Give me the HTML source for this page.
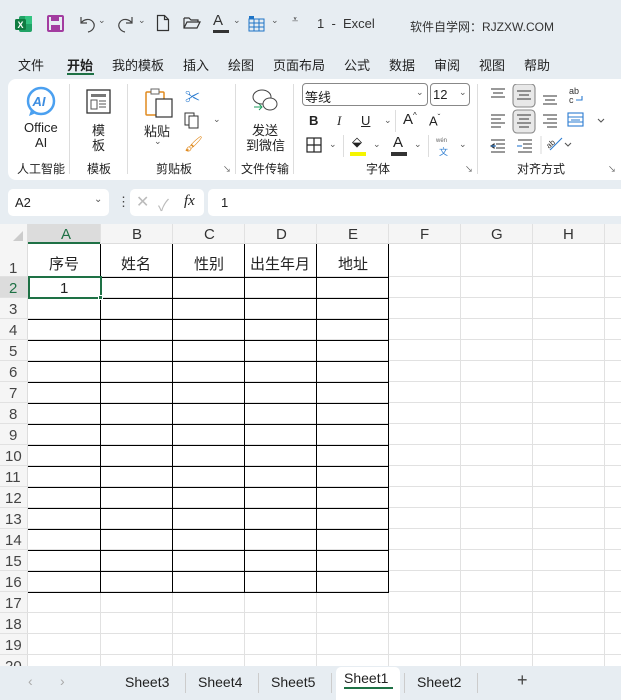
<!DOCTYPE html>
<html><head><meta charset="utf-8"><style>
*{margin:0;padding:0;box-sizing:border-box}
body{width:621px;height:700px;overflow:hidden;background:#e7edf2;font-family:"Liberation Sans","Noto Sans CJK SC",sans-serif;position:relative;color:#222}
.a{position:absolute}
.t{position:absolute;font-size:13px;white-space:nowrap}
.gl{color:#555;font-size:12px}
</style></head><body>
<!-- title bar -->
<svg class="a" style="left:14px;top:14px" width="20" height="20"><rect x="5" y="2" width="13" height="16" rx="2" fill="#21a366"/><rect x="11" y="2" width="7" height="8" fill="#33c481"/><rect x="1" y="5" width="11" height="11" rx="1.5" fill="#107c41"/><text x="3.5" y="14" font-size="9" fill="#fff" font-weight="bold" font-family="Liberation Sans">X</text></svg>
<svg class="a" style="left:46px;top:14px" width="20" height="20"><rect x="2" y="2" width="15" height="15" rx="1" fill="none" stroke="#a33ca0" stroke-width="2"/><rect x="5" y="2" width="8" height="5" fill="#a33ca0"/><rect x="5" y="11" width="9" height="6" fill="#a33ca0"/></svg>
<svg class="a" style="left:77px;top:14px" width="20" height="20"><path d="M4 3v6h6 M4 9c3-4 9-5 12-1c3 4 0 9-5 10" fill="none" stroke="#444" stroke-width="1.2"/></svg><div class="t gl" style="left:98px;top:15px;font-size:9px">⌄</div>
<svg class="a" style="left:116px;top:14px" width="20" height="20"><path d="M16 3v6h-6 M16 9c-3-4-9-5-12-1c-3 4 0 9 5 10" fill="none" stroke="#444" stroke-width="1.2"/></svg><div class="t gl" style="left:138px;top:15px;font-size:9px">⌄</div>
<svg class="a" style="left:156px;top:14px" width="14" height="18"><path d="M1.5 1.5h7l4 4v11h-11z M8.5 1.5v4h4" fill="none" stroke="#333" stroke-width="1.2"/></svg>
<svg class="a" style="left:183px;top:16px" width="18" height="14"><path d="M1 2h5l2 2h7v2 M1 2v10h13l3-6H4l-3 6" fill="none" stroke="#333" stroke-width="1.2"/></svg>
<div class="t" style="left:213px;top:12px;font-size:15px;color:#333">A</div><div class="a" style="left:213px;top:30px;width:16px;height:3px;background:#333"></div><div class="t gl" style="left:233px;top:15px;font-size:9px">⌄</div>
<svg class="a" style="left:248px;top:15px" width="18" height="17"><rect x="1" y="4" width="15" height="12" fill="none" stroke="#1e74c6"/><path d="M1 8h15M1 12h15M6 4v12M11 4v12" stroke="#1e74c6"/><rect x="1" y="1" width="5" height="3" fill="#1e74c6"/></svg><div class="t gl" style="left:271px;top:15px;font-size:9px">⌄</div>
<div class="t" style="left:292px;top:14px;font-size:11px;color:#444">⩡</div>
<div class="t" style="left:317px;top:16px;font-size:13px;color:#333">1&nbsp; -&nbsp; Excel</div>
<div class="t" style="left:410px;top:18px;font-size:12px;color:#333">软件自学网：RJZXW.COM</div>
<!-- tabs -->
<div class="t" style="left:18px;top:55px">文件</div>
<div class="t" style="left:67px;top:55px;font-weight:bold">开始</div>
<div class="a" style="left:67px;top:73px;width:27px;height:2px;background:#1e7145"></div>
<div class="t" style="left:112px;top:55px">我的模板</div>
<div class="t" style="left:183px;top:55px">插入</div>
<div class="t" style="left:228px;top:55px">绘图</div>
<div class="t" style="left:273px;top:55px">页面布局</div>
<div class="t" style="left:344px;top:55px">公式</div>
<div class="t" style="left:389px;top:55px">数据</div>
<div class="t" style="left:434px;top:55px">审阅</div>
<div class="t" style="left:479px;top:55px">视图</div>
<div class="t" style="left:524px;top:55px">帮助</div>
<!-- ribbon -->
<div class="a" style="left:8px;top:79px;width:640px;height:101px;background:#fff;border-radius:8px"></div>
<svg class="a" style="left:25px;top:86px" width="32" height="32"><circle cx="16" cy="15" r="13" fill="#fff" stroke="#4ba0f0" stroke-width="2.5"/><path d="M6 24l-2 6 7-3" fill="#4ba0f0"/><text x="7.5" y="20" font-size="13" font-weight="bold" font-style="italic" fill="#3b8ce0" font-family="Liberation Sans">AI</text></svg>
<div class="t" style="left:24px;top:120px">Office</div><div class="t" style="left:35px;top:135px">AI</div>
<div class="t" style="left:17px;top:160px;font-size:12px">人工智能</div>
<div class="a" style="left:69px;top:84px;width:1px;height:90px;background:#ddd"></div>
<svg class="a" style="left:86px;top:89px" width="26" height="26"><rect x="1" y="1" width="23" height="23" fill="none" stroke="#333" stroke-width="1.3"/><rect x="5" y="5" width="15" height="3" fill="#777"/><rect x="5" y="11" width="6" height="9" fill="none" stroke="#555"/><path d="M13 12h7M13 15h7M13 18h7" stroke="#555"/></svg>
<div class="t" style="left:92px;top:120px">模</div><div class="t" style="left:92px;top:135px">板</div>
<div class="t" style="left:87px;top:160px;font-size:12px">模板</div>
<div class="a" style="left:127px;top:84px;width:1px;height:90px;background:#ddd"></div>
<svg class="a" style="left:144px;top:87px" width="32" height="32"><rect x="2" y="5" width="18" height="23" rx="1" fill="#fff" stroke="#e08a1e" stroke-width="1.5"/><rect x="7" y="2" width="8" height="5" fill="#fff" stroke="#666"/><rect x="12" y="12" width="16" height="18" fill="#fff" stroke="#333" stroke-width="1.2"/></svg>
<div class="t" style="left:144px;top:121px">粘贴</div><div class="t gl" style="left:154px;top:136px;font-size:9px">⌄</div>
<div class="t" style="left:185px;top:86px;font-size:15px;color:#2a7bd0">✂</div>
<svg class="a" style="left:184px;top:112px" width="16" height="18"><rect x="1" y="1" width="9" height="12" fill="#fff" stroke="#333"/><rect x="5" y="4" width="9" height="12" fill="#fff" stroke="#333"/></svg>
<div class="t gl" style="left:213px;top:114px;font-size:9px">⌄</div>
<div class="t" style="left:184px;top:135px;font-size:15px;color:#e08a1e">🖌</div>
<div class="t" style="left:156px;top:160px;font-size:12px">剪贴板</div>
<div class="t gl" style="left:223px;top:164px;font-size:8px">↘</div>
<div class="a" style="left:235px;top:84px;width:1px;height:90px;background:#ddd"></div>
<svg class="a" style="left:251px;top:88px" width="28" height="26"><ellipse cx="11" cy="9" rx="9" ry="7" fill="#fff" stroke="#444"/><ellipse cx="19" cy="16" rx="7" ry="6" fill="#fff" stroke="#444"/><path d="M3 19h8M8 16l3 3-3 3" stroke="#1e9e5e" fill="none"/></svg>
<div class="t" style="left:252px;top:120px">发送</div><div class="t" style="left:246px;top:135px">到微信</div>
<div class="t" style="left:241px;top:160px;font-size:12px">文件传输</div>
<div class="a" style="left:293px;top:84px;width:1px;height:90px;background:#ddd"></div>
<div class="a" style="left:302px;top:83px;width:126px;height:23px;border:1px solid #888;border-radius:4px"></div>
<div class="t" style="left:305px;top:87px">等线</div><div class="t gl" style="left:416px;top:87px;font-size:9px">⌄</div>
<div class="a" style="left:430px;top:83px;width:40px;height:23px;border:1px solid #888;border-radius:4px"></div>
<div class="t" style="left:433px;top:87px">12</div><div class="t gl" style="left:459px;top:87px;font-size:9px">⌄</div>
<div class="t" style="left:309px;top:113px;font-weight:bold">B</div>
<div class="t" style="left:337px;top:113px;font-style:italic;font-family:'Liberation Serif'">I</div>
<div class="t" style="left:361px;top:113px;text-decoration:underline">U</div><div class="t gl" style="left:384px;top:115px;font-size:9px">⌄</div>
<div class="a" style="left:395px;top:110px;width:1px;height:22px;background:#ddd"></div>
<div class="t" style="left:403px;top:111px;font-size:15px">A<sup style="font-size:8px">^</sup></div>
<div class="t" style="left:429px;top:113px;font-size:13px">A<sup style="font-size:8px">ˇ</sup></div>
<svg class="a" style="left:306px;top:137px" width="16" height="16"><rect x="1" y="1" width="14" height="14" fill="none" stroke="#222" stroke-width="1.2"/><path d="M8 1v14M1 8h14" stroke="#222" stroke-width="1.2"/></svg><div class="t gl" style="left:329px;top:139px;font-size:9px">⌄</div>
<div class="a" style="left:343px;top:135px;width:1px;height:22px;background:#ddd"></div>
<div class="t" style="left:352px;top:134px;font-size:13px">⬙</div><div class="a" style="left:350px;top:152px;width:16px;height:4px;background:#f5f500"></div><div class="t gl" style="left:373px;top:139px;font-size:9px">⌄</div>
<div class="t" style="left:393px;top:134px;font-size:15px">A</div><div class="a" style="left:391px;top:152px;width:16px;height:4px;background:#333"></div><div class="t gl" style="left:414px;top:139px;font-size:9px">⌄</div>
<div class="a" style="left:428px;top:135px;width:1px;height:22px;background:#ddd"></div>
<div class="t" style="left:436px;top:138px;font-size:6px;color:#666">wén</div><div class="t" style="left:439px;top:145px;font-size:9px;color:#2a7bd0">文</div><div class="t gl" style="left:459px;top:139px;font-size:9px">⌄</div>
<div class="t" style="left:366px;top:160px;font-size:12px">字体</div>
<div class="t gl" style="left:465px;top:164px;font-size:8px">↘</div>
<div class="a" style="left:477px;top:84px;width:1px;height:90px;background:#ddd"></div>
<svg class="a" style="left:488px;top:84px" width="130" height="80" stroke="#333" stroke-width="1.1" fill="none">
<path d="M3 5h14M5 9h10M3 13h14"/>
<rect x="25" y="0" width="22" height="23" rx="4" fill="#e8e8e8" stroke="#888"/><path d="M29 7h14M31 11h10M29 15h14"/>
<path d="M55 12h14M57 16h10M55 20h14"/>
<text x="81" y="10" font-size="9" stroke="none" fill="#333" font-family="Liberation Sans">ab</text><text x="81" y="19" font-size="9" stroke="none" fill="#333" font-family="Liberation Sans">c</text><path d="M88 16h6v-4" stroke="#2a7bd0"/>
<path d="M3 31h14M3 35h10M3 39h14M3 43h10"/>
<rect x="25" y="26" width="22" height="23" rx="4" fill="#e8e8e8" stroke="#888"/><path d="M29 31h14M31 35h10M29 39h14M31 43h10"/>
<path d="M55 31h14M59 35h10M55 39h14M59 43h10"/>
<rect x="80" y="29" width="15" height="13" stroke="#2a7bd0"/><path d="M80 33h15M80 38h15M83 36h9" stroke="#2a7bd0"/>
<path d="M110 35l3 3 3-3" stroke="#555"/>
<path d="M3 56h14M8 60h9M8 64h9M3 68h14M3 62l3-2v4z" /><path d="M3 62h5" stroke="#2a7bd0"/>
<path d="M30 56h14M35 60h9M35 64h9M30 68h14"/><path d="M29 62h5" stroke="#2a7bd0"/>
<path d="M53 52v18" stroke="#ddd"/>
<path d="M62 66l12-12" stroke="#2a7bd0"/><text x="58" y="63" font-size="8" stroke="none" fill="#333" transform="rotate(-40 62 60)">ab</text>
<path d="M77 59l3 3 3-3" stroke="#555"/>
</svg>
<div class="t" style="left:517px;top:160px;font-size:12px">对齐方式</div>
<div class="t gl" style="left:608px;top:164px;font-size:8px">↘</div>
<!-- formula bar -->
<div class="a" style="left:8px;top:189px;width:101px;height:27px;background:#fff;border-radius:5px"></div>
<div class="t" style="left:15px;top:195px;font-size:13px">A2</div><div class="t gl" style="left:94px;top:194px;font-size:10px">⌄</div>
<div class="t" style="left:117px;top:194px;font-size:13px;color:#444">⋮</div>
<div class="a" style="left:130px;top:189px;width:74px;height:27px;background:#fff;border-radius:5px"></div>
<div class="t" style="left:136px;top:192px;font-size:16px;color:#bbb">✕</div>
<div class="t" style="left:158px;top:192px;font-size:16px;color:#bbb">✓</div>
<div class="t" style="left:184px;top:193px;font-size:15px;font-style:italic;font-family:'Liberation Serif'">fx</div>
<div class="a" style="left:208px;top:189px;width:420px;height:27px;background:#fff;border-radius:5px"></div>
<div class="t" style="left:221px;top:195px;font-size:13px">1</div>
<!-- grid -->
<div class="a" style="left:0;top:224px;width:621px;height:442px;background:#fff"></div>
<div class="a" style="left:0;top:224px;width:621px;height:20px;background:#f5f5f5;border-bottom:1px solid #ddd"></div>
<div class="a" style="left:0;top:224px;width:28px;height:442px;background:#f5f5f5;border-right:1px solid #ddd"></div>
<div class="a" style="left:28px;top:224px;width:73px;height:20px;background:#dcdcdc;border-bottom:2px solid #1e7145"></div>
<div class="a" style="left:0;top:277px;width:28px;height:21px;background:#dcdcdc"></div>
<svg class="a" style="left:12px;top:230px" width="12" height="12"><path d="M11 1v10H1z" fill="#ccc"/></svg>
<div class="a" style="left:29px;top:224px;width:592px;height:442px;background:repeating-linear-gradient(to right,transparent 0 71px,#e1e1e1 71px 72px)"></div>
<div class="a" style="left:0;top:277px;width:621px;height:389px;background-size:100% 21px;background-image:linear-gradient(to bottom,transparent 20px,#e1e1e1 20px)"></div>
<div class="a" style="left:0;top:276px;width:621px;height:1px;background:#e1e1e1"></div>
<div style="font-size:15px;color:#333">
<div class="t" style="left:61px;top:226px;font-size:15px;color:#1e7145">A</div>
<div class="t" style="left:132px;top:226px;font-size:15px">B</div>
<div class="t" style="left:204px;top:226px;font-size:15px">C</div>
<div class="t" style="left:276px;top:226px;font-size:15px">D</div>
<div class="t" style="left:348px;top:226px;font-size:15px">E</div>
<div class="t" style="left:420px;top:226px;font-size:15px">F</div>
<div class="t" style="left:491px;top:226px;font-size:15px">G</div>
<div class="t" style="left:563px;top:226px;font-size:15px">H</div>
</div>
<div style="color:#444">
<div class="t" style="left:9px;top:260px;font-size:15px">1</div>
<div class="t" style="left:9px;top:280px;font-size:15px;color:#1e7145">2</div>
<div class="t" style="left:9px;top:301px;font-size:15px">3</div>
<div class="t" style="left:9px;top:322px;font-size:15px">4</div>
<div class="t" style="left:9px;top:343px;font-size:15px">5</div>
<div class="t" style="left:9px;top:364px;font-size:15px">6</div>
<div class="t" style="left:9px;top:385px;font-size:15px">7</div>
<div class="t" style="left:9px;top:406px;font-size:15px">8</div>
<div class="t" style="left:9px;top:427px;font-size:15px">9</div>
<div class="t" style="left:5px;top:448px;font-size:15px">10</div>
<div class="t" style="left:5px;top:469px;font-size:15px">11</div>
<div class="t" style="left:5px;top:490px;font-size:15px">12</div>
<div class="t" style="left:5px;top:511px;font-size:15px">13</div>
<div class="t" style="left:5px;top:532px;font-size:15px">14</div>
<div class="t" style="left:5px;top:553px;font-size:15px">15</div>
<div class="t" style="left:5px;top:574px;font-size:15px">16</div>
<div class="t" style="left:5px;top:595px;font-size:15px">17</div>
<div class="t" style="left:5px;top:616px;font-size:15px">18</div>
<div class="t" style="left:5px;top:637px;font-size:15px">19</div>
<div class="t" style="left:5px;top:658px;font-size:15px">20</div>
</div>
<!-- black borders -->
<div class="a" style="left:28px;top:277px;width:361px;height:316px;background:repeating-linear-gradient(to bottom,#000 0 1px,transparent 1px 21px)"></div>
<div class="a" style="left:28px;top:592px;width:361px;height:1px;background:#000"></div>
<div class="a" style="left:100px;top:244px;width:289px;height:349px;background:repeating-linear-gradient(to right,#000 0 1px,transparent 1px 72px)"></div>
<div class="a" style="left:388px;top:244px;width:1px;height:349px;background:#000"></div>
<div style="font-size:15px;color:#222">
<div class="t" style="left:49px;top:253px;font-size:15px">序号</div>
<div class="t" style="left:121px;top:253px;font-size:15px">姓名</div>
<div class="t" style="left:194px;top:253px;font-size:15px">性别</div>
<div class="t" style="left:250px;top:253px;font-size:15px">出生年月</div>
<div class="t" style="left:338px;top:253px;font-size:15px">地址</div>
<div class="t" style="left:60px;top:280px;font-size:15px">1</div>
</div>
<div class="a" style="left:28px;top:276px;width:74px;height:23px;border:2px solid #1e7145"></div>
<div class="a" style="left:98px;top:295px;width:5px;height:5px;background:#1e7145;border:1px solid #fff"></div>
<!-- sheet tabs -->
<div class="a" style="left:0;top:666px;width:621px;height:34px;background:#e7edf2"></div>
<div class="t" style="left:28px;top:673px;font-size:14px;color:#aaa">‹</div>
<div class="t" style="left:60px;top:673px;font-size:14px;color:#aaa">›</div>
<div class="a" style="left:336px;top:667px;width:64px;height:33px;background:#fff;border-radius:5px 5px 0 0"></div>
<div class="a" style="left:344px;top:687px;width:49px;height:2px;background:#1e7145"></div>
<div class="t" style="left:125px;top:674px;font-size:14px">Sheet3</div>
<div class="t" style="left:198px;top:674px;font-size:14px">Sheet4</div>
<div class="t" style="left:271px;top:674px;font-size:14px">Sheet5</div>
<div class="t" style="left:344px;top:670px;font-size:14px">Sheet1</div>
<div class="t" style="left:417px;top:674px;font-size:14px">Sheet2</div>
<div class="t" style="left:517px;top:670px;font-size:18px;color:#444">+</div>
<div class="a" style="left:185px;top:673px;width:1px;height:20px;background:#ccc"></div>
<div class="a" style="left:258px;top:673px;width:1px;height:20px;background:#ccc"></div>
<div class="a" style="left:331px;top:673px;width:1px;height:20px;background:#ccc"></div>
<div class="a" style="left:404px;top:673px;width:1px;height:20px;background:#ccc"></div>
<div class="a" style="left:477px;top:673px;width:1px;height:20px;background:#ccc"></div>
</body></html>
